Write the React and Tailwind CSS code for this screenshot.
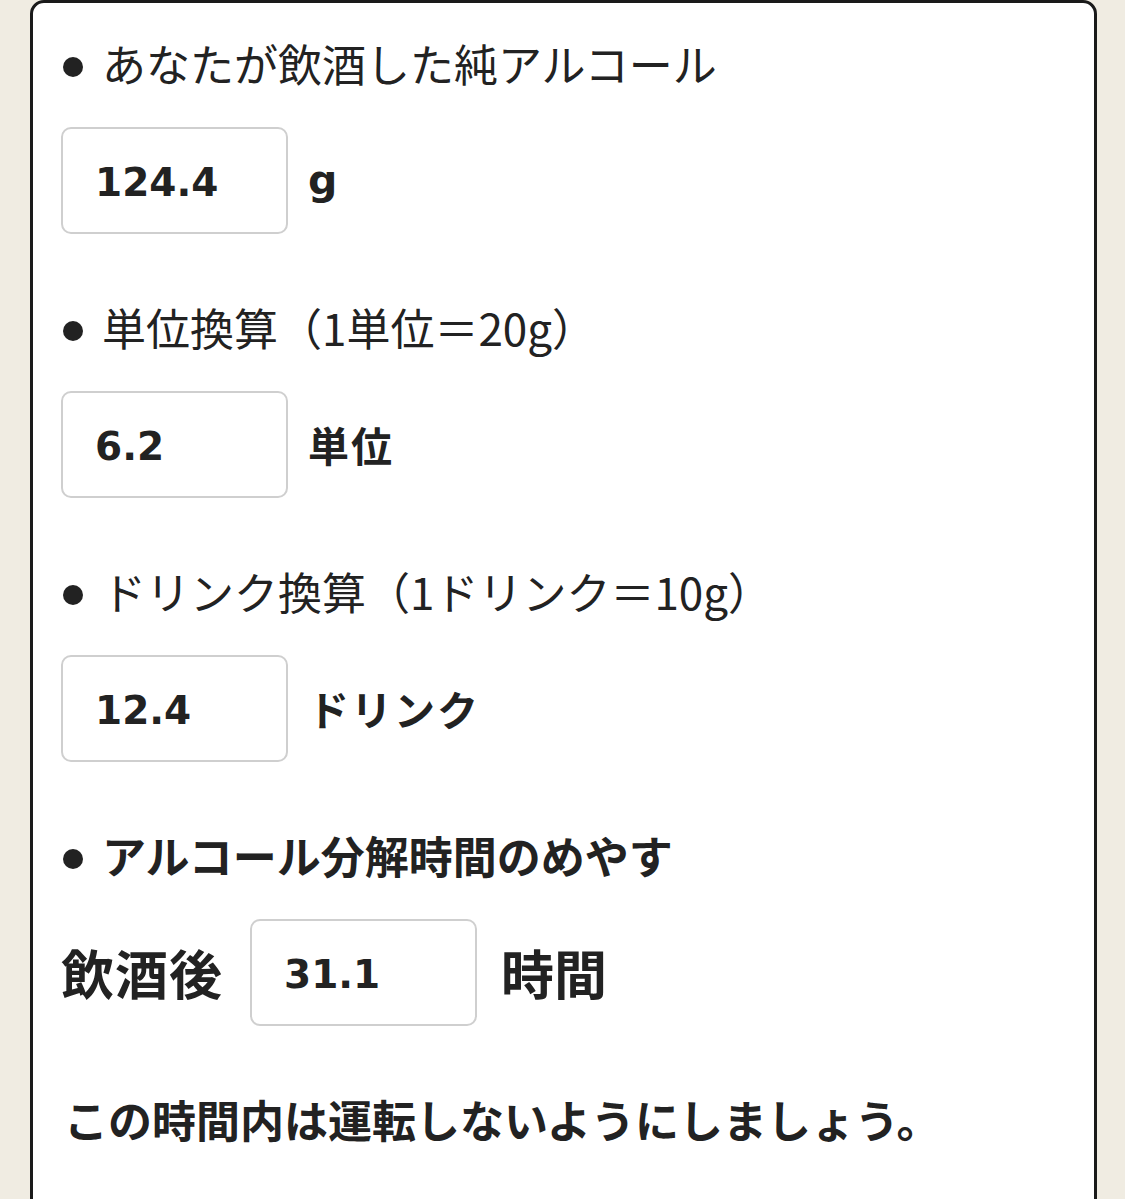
import React from "react";

const jp = { fontFamily: '"Noto Sans CJK JP", "Noto Sans", sans-serif' };
const num = { fontFamily: '"DejaVu Sans", "Noto Sans CJK JP", sans-serif' };

const Heading = ({ children, bold }) => (
  <div className="flex items-center h-[66px]">
    <span className="w-5 h-5 rounded-full bg-[#222] mt-[8px] ml-[2px] mr-[19px] shrink-0" />
    <span
      className={`text-[44px] leading-[66px] text-[#222] whitespace-nowrap ${bold ? "font-bold" : "font-normal"}`}
      style={jp}
    >
      {children}
    </span>
  </div>
);

const ValueBox = ({ value }) => (
  <div className="w-[227px] h-[107px] border-2 border-[#cfcfcf] rounded-[10px] flex items-center pl-[32px] pt-[6px] bg-white shrink-0">
    <span className="text-[39px] font-bold text-[#222]" style={num}>
      {value}
    </span>
  </div>
);

const Section = ({ title, value, unit }) => (
  <div className="flex flex-col gap-[31px]">
    <Heading>{title}</Heading>
    <div className="flex items-center gap-[20px]">
      <ValueBox value={value} />
      <span className="text-[41px] font-bold text-[#222] tracking-[2px]" style={unit === "g" ? num : jp}>
        {unit}
      </span>
    </div>
  </div>
);

export default function App() {
  return (
    <div className="w-[1125px] h-[1199px] bg-[#f0ece2] overflow-hidden">
      <div className="ml-[30px] w-[1067px] h-[1260px] bg-white border-[3px] border-[#1a1a1a] rounded-t-[14px] pt-[27px] pl-[28px]">
        <div className="flex flex-col gap-[60px]">
          <Section title="あなたが飲酒した純アルコール" value="124.4" unit="g" />
          <Section title="単位換算（1単位＝20g）" value="6.2" unit="単位" />
          <Section title="ドリンク換算（1ドリンク＝10g）" value="12.4" unit="ドリンク" />
          <div className="flex flex-col gap-[31px]">
            <Heading bold>アルコール分解時間のめやす</Heading>
            <div className="flex items-center">
              <span className="text-[53px] font-bold text-[#222] mr-[27px] tracking-[1px]" style={jp}>
                飲酒後
              </span>
              <ValueBox value="31.1" />
              <span className="text-[53px] font-bold text-[#222] ml-[24px]" style={jp}>
                時間
              </span>
            </div>
          </div>
          <div className="h-[66px] flex items-center pl-[3px]">
            <span className="text-[44px] font-bold text-[#222] whitespace-nowrap" style={jp}>
              この時間内は運転しないようにしましょう。
            </span>
          </div>
        </div>
      </div>
    </div>
  );
}
